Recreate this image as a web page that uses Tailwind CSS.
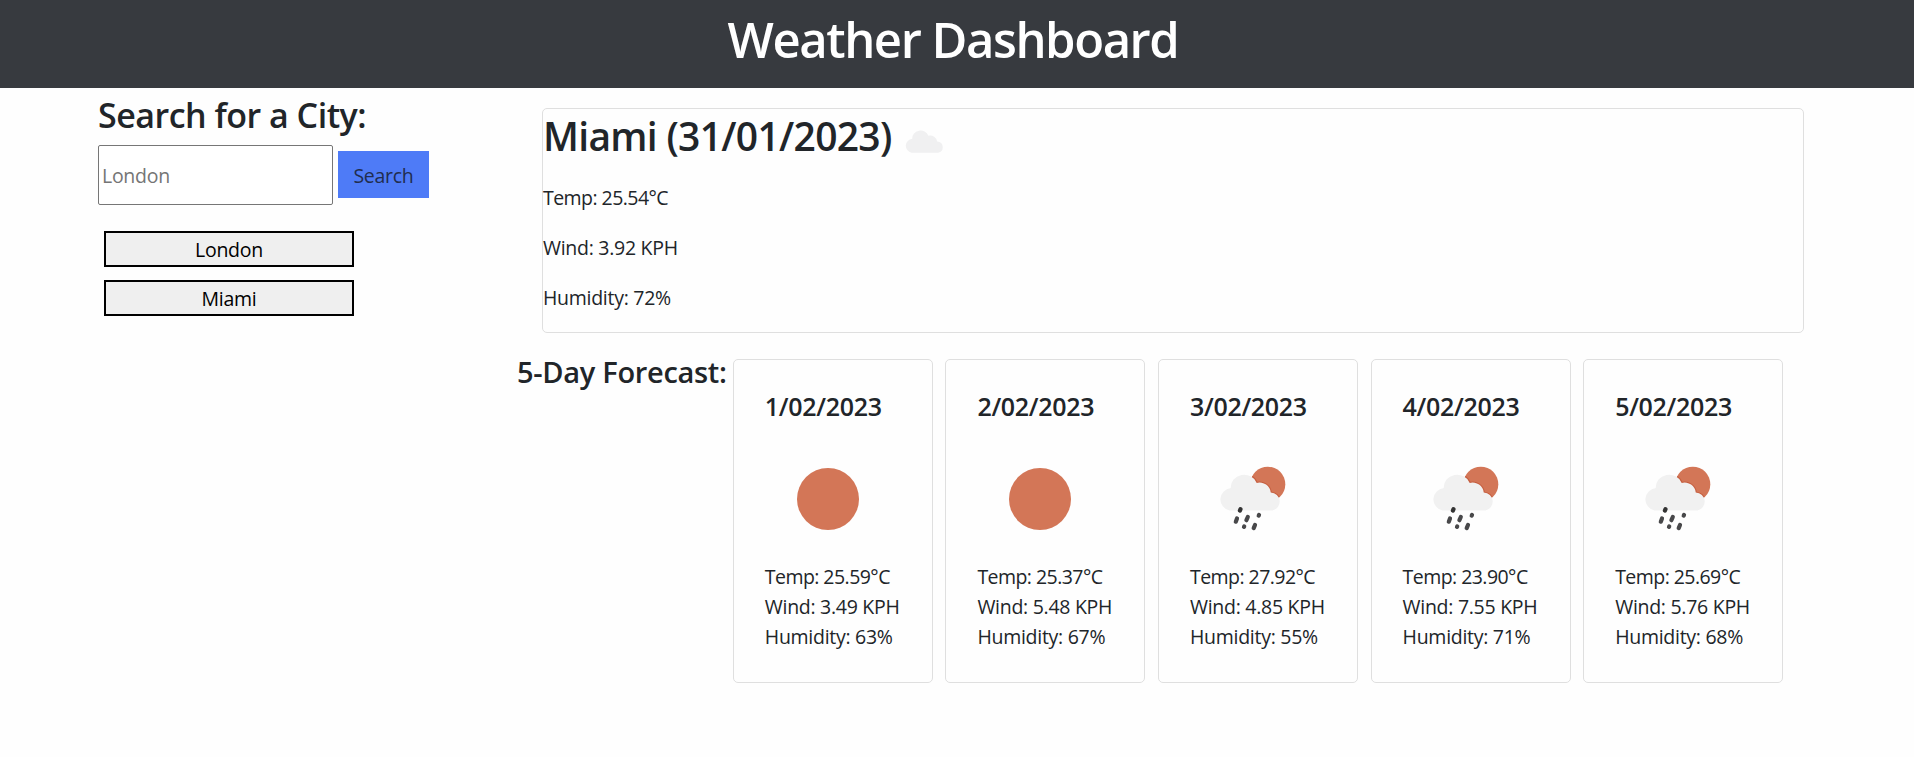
<!DOCTYPE html>
<html lang="en">
<head>
<meta charset="utf-8">
<title>Weather Dashboard</title>
<script src="https://cdn.jsdelivr.net/npm/@tailwindcss/browser@4"></script>
</head>
<body class="bg-[#fefefe] text-[#212529] font-['Open_Sans','Noto_Sans',sans-serif] text-[19.500px] tracking-[-0.280px] leading-[30px] overflow-hidden">
<svg class="absolute w-0 h-0">
  <defs>
    <path id="cloud-shape" d="M11.500 37.500 A11.200 11.200 0 0 1 12.500 15.500 A12.400 12.400 0 0 1 36.500 10.500 A10.500 10.500 0 0 1 49.500 19.800 A9 9 0 0 1 51 37.500 Z"/>
    <clipPath id="sun-clip"><circle cx="59.800" cy="30.200" r="17.500"/></clipPath>
  </defs>
  <symbol id="cloud" viewBox="1.700 0 56.500 38" preserveAspectRatio="none"><use href="#cloud-shape" fill="#f0f0f1"/></symbol>
  <symbol id="sun" viewBox="0 0 90 90"><circle cx="45" cy="45" r="31" fill="#d37657"/></symbol>
  <symbol id="rain" viewBox="0 0 90 90">
    <circle cx="59.800" cy="30.200" r="17.500" fill="#d37657"/>
    <g clip-path="url(#sun-clip)">
      <use href="#cloud-shape" transform="translate(9.300 18.200) scale(1.080 1.020)" fill="none" stroke="#c65f40" stroke-width="2"/>
    </g>
    <use href="#cloud-shape" transform="translate(9.300 18.200) scale(1.080 1.020)" fill="#f1f1f1"/>
    <g transform="translate(2 1)" stroke="#48484a" stroke-width="4.200" stroke-linecap="round">
      <path d="M30.500 54.200 l-.6 1.400" stroke="#333"/>
      <path d="M27 63.500 l-1.200 3.200M37.800 62 l-1.400 3.200M45 70 l-1.300 3.100"/>
      <path d="M49 60 l-.3 .6M34.200 71.500 l-.2 .4"/>
    </g>
  </symbol>
</svg>

<header class="h-[88px] bg-[#373a3f] pt-[9px] pr-[8px] text-center text-white">
  <h1 class="text-[49px] leading-[60px] font-semibold tracking-[-1.450px]">Weather Dashboard</h1>
</header>

<div class="flex">
  <aside class="w-[420px] pl-[98px] pt-[6px] shrink-0">
    <h2 class="text-[34px] leading-[42px] font-semibold tracking-[-0.500px] whitespace-nowrap">Search for a City:</h2>
    <div class="mt-[9px] flex items-center gap-[5px] w-[331px]">
      <input placeholder="London" class="w-[235px] h-[60px] border border-[#767676] rounded-[2px] px-[3px] pt-px bg-white shrink-0 placeholder:text-[#757575]">
      <button class="w-[91px] h-[47px] mb-px bg-[#4e7bf7] text-[#212d4f] shrink-0 pt-[3px]">Search</button>
    </div>
    <div class="mt-[26px] ml-[6px] flex flex-col gap-[13px]">
      <button class="w-[250px] h-[36px] border-2 border-black bg-[#efefef] text-black pt-[2px]">London</button>
      <button class="w-[250px] h-[36px] border-2 border-black bg-[#efefef] text-black pt-[2px]">Miami</button>
    </div>
  </aside>

  <main class="pt-[20px] pl-[97px]">
    <section class="ml-[25px] w-[1262px] h-[225px] border border-[#dfdfdf] rounded-[5px]">
      <div class="flex h-[53px]">
        <h2 class="text-[39px] leading-[54px] font-semibold tracking-[-0.700px] whitespace-nowrap w-[362px]">Miami (31/01/2023)</h2>
        <svg class="mt-[20px] w-[38px] h-[24px]"><use href="#cloud"/></svg>
      </div>
      <div class="mt-[21px] flex flex-col gap-[20px]">
        <p class="tracking-[-0.550px]">Temp: 25.54°C</p><p>Wind: 3.92 KPH</p><p>Humidity: 72%</p>
      </div>
    </section>

    <section class="mt-[26px] flex">
      <h3 class="w-[215.800px] text-[29px] leading-[26px] font-semibold tracking-[-0.300px] whitespace-nowrap">5-Day Forecast:</h3>
      <div id="days" class="flex gap-[12.600px]"></div>
    </section>
  </main>
</div>
<script>
const days = [
  ['1/02/2023', 'sun', '25.59', '3.49', 63],
  ['2/02/2023', 'sun', '25.37', '5.48', 67],
  ['3/02/2023', 'rain', '27.92', '4.85', 55],
  ['4/02/2023', 'rain', '23.90', '7.55', 71],
  ['5/02/2023', 'rain', '25.69', '5.76', 68],
];
document.getElementById('days').innerHTML = days.map(([d, icon, t, w, h]) => `
  <article class="w-[200px] h-[324px] border border-[#dfdfdf] rounded-[5px] pt-[31px] pl-[31px] whitespace-nowrap">
    <h4 class="text-[25px] leading-[30px] font-semibold tracking-[-0.300px]">${d}</h4>
    <svg class="mt-[33px] ml-[18px] w-[90px] h-[90px]"><use href="#${icon}"/></svg>
    <div class="mt-[18px]"><p class="tracking-[-0.550px]">Temp: ${t}°C</p><p>Wind: ${w} KPH</p><p>Humidity: ${h}%</p></div>
  </article>`).join('');
</script>
</body>
</html>
